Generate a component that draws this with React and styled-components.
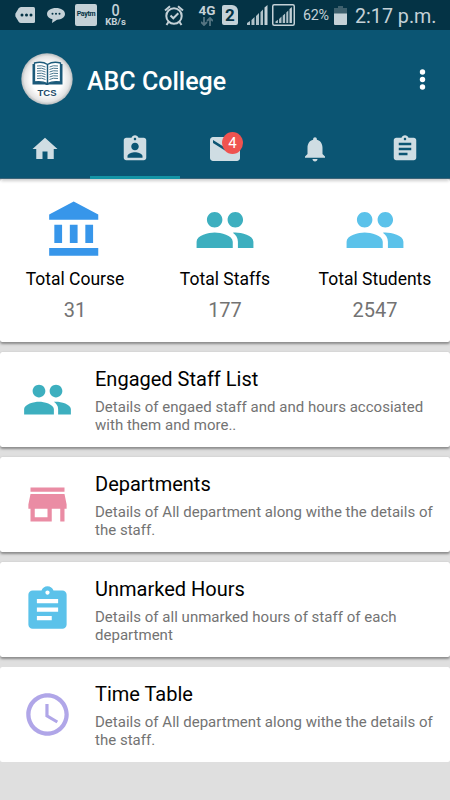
import React from 'react'
import styled, { createGlobalStyle } from 'styled-components'

const GlobalStyle = createGlobalStyle`
    * {
        box-sizing: border-box;
    }
    body {
        margin: 0;
        background-color: #dfdfdf;
        font-family: Roboto, "Liberation Sans", sans-serif;
    }
`

//Material icon paths
const paths = {
    home: 'M10 20v-6h4v6h5v-8h3L12 3 2 12h3v8z',
    profile: 'M19 3h-4.18C14.4 1.84 13.3 1 12 1c-1.3 0-2.4.84-2.82 2H5c-1.1 0-2 .9-2 2v14c0 1.1.9 2 2 2h14c1.1 0 2-.9 2-2V5c0-1.1-.9-2-2-2zm-7 0c.55 0 1 .45 1 1s-.45 1-1 1-1-.45-1-1 .45-1 1-1zm0 4c1.66 0 3 1.34 3 3s-1.34 3-3 3-3-1.34-3-3 1.34-3 3-3zm6 12H6v-1.4c0-2 4-3.1 6-3.1s6 1.1 6 3.1V19z',
    mail: 'M20 4H4c-1.1 0-1.99.9-1.99 2L2 18c0 1.1.9 2 2 2h16c1.1 0 2-.9 2-2V6c0-1.1-.9-2-2-2zm0 4l-8 5-8-5V6l8 5 8-5v2z',
    bell: 'M12 22c1.1 0 2-.9 2-2h-4c0 1.1.89 2 2 2zm6-6v-5c0-3.07-1.64-5.64-4.5-6.32V4c0-.83-.67-1.5-1.5-1.5s-1.5.67-1.5 1.5v.68C7.63 5.36 6 7.92 6 11v5l-2 2v1h16v-1l-2-2z',
    assignment: 'M19 3h-4.18C14.4 1.84 13.3 1 12 1c-1.3 0-2.4.84-2.82 2H5c-1.1 0-2 .9-2 2v14c0 1.1.9 2 2 2h14c1.1 0 2-.9 2-2V5c0-1.1-.9-2-2-2zm-7 0c.55 0 1 .45 1 1s-.45 1-1 1-1-.45-1-1 .45-1 1-1zm2 14H7v-2h7v2zm3-4H7v-2h10v2zm0-4H7V7h10v2z',
    bank: 'M4 10v7h3v-7H4zm6 0v7h3v-7h-3zM2 22h19v-3H2v3zm14-12v7h3v-7h-3zm-4.5-9L2 6v2h19V6l-9.500-5z',
    people: 'M16 11c1.66 0 2.99-1.34 2.99-3S17.66 5 16 5c-1.66 0-3 1.34-3 3s1.34 3 3 3zm-8 0c1.66 0 2.99-1.34 2.99-3S9.66 5 8 5C6.34 5 5 6.34 5 8s1.34 3 3 3zm0 2c-2.33 0-7 1.17-7 3.5V19h14v-2.5c0-2.33-4.67-3.5-7-3.5zm8 0c-.29 0-.62.02-.97.05 1.16.84 1.97 1.97 1.97 3.45V19h6v-2.5c0-2.33-4.67-3.5-7-3.5z',
    store: 'M20 4H4v2h16V4zm1 10v-2l-1-5H4l-1 5v2h1v6h10v-6h4v6h2v-6h1zm-9 4H6v-4h6v4z',
    clock: 'M11.99 2C6.47 2 2 6.48 2 12s4.47 10 9.99 10C17.52 22 22 17.52 22 12S17.52 2 11.99 2zM12 20c-4.42 0-8-3.58-8-8s3.58-8 8-8 8 3.58 8 8-3.58 8-8 8zm.5-13H11v6l5.25 3.15.75-1.23-4.5-2.67z',
}

const stats = [
    { label: 'Total Course', value: 31, icon: 'bank', color: '#3796ea' },
    { label: 'Total Staffs', value: 177, icon: 'people', color: '#3dafbf' },
    { label: 'Total Students', value: 2547, icon: 'people', color: '#5bc2ea' },
]

const items = [
    { title: 'Engaged Staff List', text: 'Details of engaed staff and and hours accosiated with them and more..', icon: 'people', color: '#3dafbf' },
    { title: 'Departments', text: 'Details of All department along withe the details of the staff.', icon: 'store', color: '#ea8ca4' },
    { title: 'Unmarked Hours', text: 'Details of all unmarked hours of staff of each department', icon: 'assignment', color: '#5bc2ea' },
    { title: 'Time Table', text: 'Details of All department along withe the details of the staff.', icon: 'clock', color: '#b0a6e8' },
]

//Styled Components
const Screen = styled.div`
    width: 450px;
    height: 800px;
    overflow: hidden;
    background-color: #dfdfdf;
`

const StatusBar = styled.div`
    display: flex;
    align-items: center;
    height: 30px;
    padding-left: 15px;
    background-color: #043345;
    color: #c4d1d7;
    white-space: nowrap;
`

const StatusIcon = styled.svg`
    flex: none;
    margin-right: ${props => props.$gap}px;
`

const Paytm = styled.div`
    flex: none;
    width: 22px;
    height: 22px;
    margin-right: 7px;
    border-radius: 2px;
    background-color: #c4d1d7;
    color: #043345;
    font-size: 7px;
    font-weight: 700;
    line-height: 21px;
    letter-spacing: -0.3px;
    text-align: center;
`

const Speed = styled.div`
    display: flex;
    flex: none;
    flex-direction: column;
    align-items: center;
    width: 23px;
    margin-right: 37px;
`

const SpeedValue = styled.div`
    font-size: 16px;
    font-weight: 500;
    line-height: 13px;
    transform: scaleX(0.9);
`

const SpeedUnit = styled.div`
    font-size: 9.6px;
    font-weight: 700;
    line-height: 10px;
`

const Network = styled.div`
    display: flex;
    flex: none;
    flex-direction: column;
    align-items: center;
    width: 18px;
    margin-right: 6px;
    font-size: 13.5px;
    font-weight: 700;
    line-height: 13px;
`

const Sim = styled.div`
    flex: none;
    width: 16px;
    height: 20px;
    margin-right: 9px;
    border-radius: 2px 6px 2px 2px;
    background-color: #c4d1d7;
    color: #043345;
    font-size: 17px;
    font-weight: 700;
    line-height: 20px;
    text-align: center;
`

const Percent = styled.div`
    width: 27px;
    margin-right: 4px;
    font-size: 14.3px;
    letter-spacing: -0.3px;
`

const Time = styled.div`
    padding-top: 2px;
    font-size: 19.7px;
`

const AppBar = styled.div`
    display: flex;
    align-items: center;
    height: 90px;
    padding: 7px 20px 0 21px;
    background-color: #0b5573;
    color: white;
`

const Title = styled.h1`
    flex: 1;
    margin: 0 0 0 14px;
    padding-top: 5px;
    font-size: 25px;
    font-weight: 500;
`

const MoreIcon = styled.svg`
    margin-bottom: 2px;
`

const TabBar = styled.div`
    display: grid;
    grid-template-columns: repeat(5, 1fr);
    position: relative;
    height: 59px;
    background-color: #0b5573;
    border-bottom: 1px solid #3c6478;
    box-shadow: 0 3px 3px -1px rgba(0, 0, 0, 0.2);
`

const Tab = styled.div`
    display: flex;
    justify-content: center;
    align-items: center;
    position: relative;
    height: 59px;
    padding-top: 2px;
    color: #cfdde3;
    border-bottom: 3px solid ${props => (props.$active ? '#1495a6' : 'transparent')};
`

const Badge = styled.div`
    position: absolute;
    top: 12px;
    left: 42px;
    width: 21px;
    height: 22px;
    border-radius: 50%;
    background-color: #ef5350;
    color: white;
    font-size: 15px;
    line-height: 23px;
    text-align: center;
`

const Card = styled.div`
    display: flex;
    border-radius: 2.5px;
    background-color: white;
    box-shadow: 0 1.5px 2.5px rgba(0, 0, 0, 0.38);
`

const Stats = styled(Card)`
    height: 163px;
    margin-bottom: 10px;
`

const Stat = styled.div`
    display: flex;
    flex: 1;
    flex-direction: column;
    align-items: center;
    padding-top: 20px;
    white-space: nowrap;
`

const StatIcon = styled.div`
    display: flex;
    color: ${props => props.$color};
`

const StatLabel = styled.div`
    margin-top: 7px;
    color: black;
    font-size: 17.5px;
    line-height: 22px;
`

const StatValue = styled.div`
    margin-top: 7px;
    color: #737373;
    font-size: 20px;
    line-height: 26px;
`

const ListItem = styled(Card)`
    height: 95px;
    margin-bottom: 10px;
    box-shadow: ${props => (props.$flat ? 'none' : '0 1.5px 2.5px rgba(0, 0, 0, 0.38)')};
`

const ItemIcon = styled.div`
    display: flex;
    flex: none;
    justify-content: center;
    align-items: center;
    width: 95px;
    color: ${props => props.$color};
`

const ItemBody = styled.div`
    padding-top: 14.5px;
`

const ItemTitle = styled.div`
    color: black;
    font-size: 20px;
    line-height: 24px;
`

const ItemText = styled.div`
    width: 345px;
    margin-top: 8.5px;
    color: #737373;
    font-size: 15px;
    line-height: 17.5px;
    letter-spacing: 0.02px;
`

const Icon = ({ name, size }) => (
    <svg width={size} height={size} viewBox="0 0 24 24" fill="currentColor">
        <path d={paths[name]} />
    </svg>
)

const Signal = () => (
    <g fill="#c4d1d7">
        <path d="M0 20v-2l3-2v4zM4.500 20v-5l3-3v8zM9 20v-9l3-3v12zM13.500 20V7l2.500-2.500V20z" fillOpacity="0.9" />
        <path d="M17.500 20V2.500L20.500 0V20z" />
    </g>
)

const Logo = () => (
    <svg width="52" height="52" viewBox="0 0 52 52">
        <defs>
            <radialGradient id="disc">
                <stop offset="0.6" stopColor="#ffffff" />
                <stop offset="0.88" stopColor="#e4e4e4" />
                <stop offset="1" stopColor="#b8bcbe" />
            </radialGradient>
        </defs>
        <circle cx="26" cy="26" r="25.700" fill="url(#disc)" />
        <path d="M13 11h-1.500v20.500H24q2 1.200 4 0h13.500V11H40" fill="#1c5a7a" />
        <path d="M13.500 10q8-2 13 1.500Q32 8 39.500 10v19q-8-1-13 1.500Q21 28 13.500 29z" fill="#fff" stroke="#1c5a7a" strokeWidth="1.300" />
        <path d="M26.500 12v18" stroke="#1c5a7a" strokeWidth="1.500" />
        <path
            d="M16 13q5-1 8.500 1M16 15.500q5-1 8.500 1M16 18q5-1 8.500 1M16 20.500q5-1 8.500 1M16 23q5-1 8.500 1M16 25.500q5-1 8.500 1M37 13q-5-1-8.500 1M37 15.500q-5-1-8.500 1M37 18q-5-1-8.500 1M37 20.500q-5-1-8.500 1M37 23q-5-1-8.500 1M37 25.500q-5-1-8.500 1"
            fill="none"
            stroke="#4a7890"
            strokeWidth="1"
        />
        <text x="26" y="42.600" textAnchor="middle" fontFamily="Liberation Sans, sans-serif" fontWeight="700" fontSize="9.500" fill="#1c4a68">TCS</text>
    </svg>
)

const Status = () => (
    <StatusBar>
        <StatusIcon $gap={12} width="20" height="16" viewBox="0 0 20 16">
            <path d="M6 0h12.500q1.500 0 1.500 1.500v13q0 1.500-1.500 1.500H6Q4.500 16 3.500 14.500L.5 9.500Q0 8 .5 6.500L3.500 1.500Q4.500 0 6 0z" fill="#c4d1d7" />
            <g fill="#043345"><circle cx="7" cy="8" r="1.500" /><circle cx="11.500" cy="8" r="1.500" /><circle cx="16" cy="8" r="1.500" /></g>
        </StatusIcon>
        <StatusIcon $gap={10} width="18" height="15" viewBox="0 0 18 15">
            <path d="M9 0c5 0 9 2.500 9 6s-3.500 5.500-8 5.800L5 15l.5-3.700C2 10.500 0 8.700 0 6c0-3.500 4-6 9-6z" fill="#c4d1d7" />
            <g fill="#043345"><circle cx="5.500" cy="5.700" r="1" /><circle cx="9" cy="5.700" r="1" /><circle cx="12.500" cy="5.700" r="1" /></g>
        </StatusIcon>
        <Paytm>Paytm</Paytm>
        <Speed>
            <SpeedValue>0</SpeedValue>
            <SpeedUnit>KB/s</SpeedUnit>
        </Speed>
        <StatusIcon $gap={14} width="20" height="21" viewBox="0 0 20 21" fill="none" stroke="#c4d1d7" strokeWidth="2">
            <circle cx="10" cy="11" r="7.700" />
            <path d="M1 5.500L6 1.200M19 5.500L14 1.200M4.500 17L2.500 20M15.500 17l2 3M6.500 10.500l2.800 2.800 5-5" />
        </StatusIcon>
        <Network>
            4G
            <svg width="12" height="9" viewBox="0 0 12 9" fill="none" stroke="#557582" strokeWidth="1.800">
                <path d="M3 0v7M0 5l3 3 3-3M9 9V1M6 4l3-3 3 3" />
            </svg>
        </Network>
        <Sim>2</Sim>
        <StatusIcon $gap={4} width="21" height="20" viewBox="0 0 21 20"><Signal /></StatusIcon>
        <StatusIcon $gap={8} width="23" height="22" viewBox="0 0 23 22">
            <rect x="0.750" y="0.750" width="21.500" height="20.500" rx="1.500" fill="none" stroke="#c4d1d7" strokeWidth="1.500" />
            <g transform="translate(3.500 3) scale(0.800)"><Signal /></g>
        </StatusIcon>
        <Percent>62%</Percent>
        <StatusIcon $gap={8} width="13" height="19" viewBox="0 0 13 19">
            <path d="M4 0h5v2h4v6H0V2h4z" fill="#3e606d" />
            <path d="M0 7.500h13V18q0 1-1 1H1q-1 0-1-1z" fill="#c4d1d7" />
        </StatusIcon>
        <Time>2:17 p.m.</Time>
    </StatusBar>
)

const App = () => {
    return (
        <Screen>
            <GlobalStyle />
            <Status />
            <AppBar>
                <Logo />
                <Title>ABC College</Title>
                <MoreIcon width="16" height="30" viewBox="0 0 16 30" fill="white">
                    <circle cx="8.500" cy="9" r="2.700" />
                    <circle cx="8.500" cy="16.500" r="2.700" />
                    <circle cx="8.500" cy="24" r="2.700" />
                </MoreIcon>
            </AppBar>
            <TabBar>
                <Tab><Icon name="home" size={30} /></Tab>
                <Tab $active><Icon name="profile" size={30} /></Tab>
                <Tab>
                    <Icon name="mail" size={36} />
                    <Badge>4</Badge>
                </Tab>
                <Tab><Icon name="bell" size={30} /></Tab>
                <Tab><Icon name="assignment" size={30} /></Tab>
            </TabBar>
            <Stats>
                {stats.map(stat => (
                    <Stat key={stat.label}>
                        <StatIcon $color={stat.color}><Icon name={stat.icon} size={62} /></StatIcon>
                        <StatLabel>{stat.label}</StatLabel>
                        <StatValue>{stat.value}</StatValue>
                    </Stat>
                ))}
            </Stats>
            {items.map((item, index) => (
                <ListItem key={item.title} $flat={index === items.length - 1}>
                    <ItemIcon $color={item.color}><Icon name={item.icon} size={51} /></ItemIcon>
                    <ItemBody>
                        <ItemTitle>{item.title}</ItemTitle>
                        <ItemText>{item.text}</ItemText>
                    </ItemBody>
                </ListItem>
            ))}
        </Screen>
    )
}

export default App
